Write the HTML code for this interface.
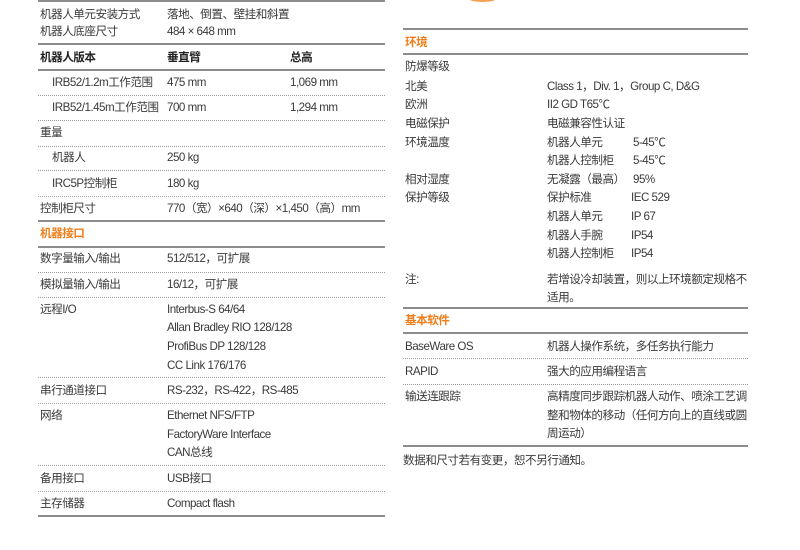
<!DOCTYPE html>
<html><head><meta charset="utf-8"><style>
body{margin:0;width:800px;height:550px;background:#fff;position:relative;overflow:hidden;font-family:"Liberation Sans","Noto Sans CJK SC",sans-serif;font-size:11.6px;color:#3a3a3a}
.t{position:absolute;white-space:nowrap;line-height:14px;letter-spacing:-0.5px}
.b{font-weight:bold;color:#222}
.o{font-weight:bold;color:#f07d1a}
.s{position:absolute;height:0;border-top:2px solid #8c8c8c}
.d{position:absolute;height:0;border-top:1px dotted #9a9a9a}
</style></head><body>
<div style="position:absolute;left:470px;top:-3px;width:25px;height:5px;border-radius:50%;background:#f5a050"></div>
<!-- LEFT -->
<div class="s" style="left:38px;width:347px;top:0"></div>
<div class="t" style="left:40px;top:8px">机器人单元安装方式</div><div class="t" style="left:167px;top:8px">落地、倒置、壁挂和斜置</div>
<div class="t" style="left:40px;top:25px">机器人底座尺寸</div><div class="t" style="left:167px;top:25px">484 × 648 mm</div>
<div class="s" style="left:38px;width:347px;top:43px"></div>
<div class="t b" style="left:40px;top:51px">机器人版本</div><div class="t b" style="left:167px;top:51px">垂直臂</div><div class="t b" style="left:290px;top:51px">总高</div>
<div class="s" style="left:38px;width:347px;top:69px"></div>
<div class="t" style="left:52px;top:76px">IRB52/1.2m工作范围</div><div class="t" style="left:167px;top:76px">475 mm</div><div class="t" style="left:290px;top:76px">1,069 mm</div>
<div class="d" style="left:38px;width:347px;top:95px"></div>
<div class="t" style="left:52px;top:101px">IRB52/1.45m工作范围</div><div class="t" style="left:167px;top:101px">700 mm</div><div class="t" style="left:290px;top:101px">1,294 mm</div>
<div class="d" style="left:38px;width:347px;top:120px"></div>
<div class="t" style="left:40px;top:126px">重量</div>
<div class="d" style="left:38px;width:347px;top:146px"></div>
<div class="t" style="left:52px;top:151px">机器人</div><div class="t" style="left:167px;top:151px">250 kg</div>
<div class="d" style="left:38px;width:347px;top:170px"></div>
<div class="t" style="left:52px;top:177px">IRC5P控制柜</div><div class="t" style="left:167px;top:177px">180 kg</div>
<div class="d" style="left:38px;width:347px;top:196px"></div>
<div class="t" style="left:40px;top:202px">控制柜尺寸</div><div class="t" style="left:167px;top:202px">770（宽）×640（深）×1,450（高）mm</div>
<div class="s" style="left:38px;width:347px;top:220px"></div>
<div class="t o" style="left:40px;top:227px">机器接口</div>
<div class="s" style="left:38px;width:347px;top:246px"></div>
<div class="t" style="left:40px;top:252px">数字量输入/输出</div><div class="t" style="left:167px;top:252px">512/512，可扩展</div>
<div class="d" style="left:38px;width:347px;top:272px"></div>
<div class="t" style="left:40px;top:278px">模拟量输入/输出</div><div class="t" style="left:167px;top:278px">16/12，可扩展</div>
<div class="d" style="left:38px;width:347px;top:297px"></div>
<div class="t" style="left:40px;top:303px">远程I/O</div>
<div class="t" style="left:167px;top:303px">Interbus-S 64/64</div>
<div class="t" style="left:167px;top:321px">Allan Bradley RIO 128/128</div>
<div class="t" style="left:167px;top:340px">ProfiBus DP 128/128</div>
<div class="t" style="left:167px;top:359px">CC Link 176/176</div>
<div class="d" style="left:38px;width:347px;top:377px"></div>
<div class="t" style="left:40px;top:384px">串行通道接口</div><div class="t" style="left:167px;top:384px">RS-232，RS-422，RS-485</div>
<div class="d" style="left:38px;width:347px;top:403px"></div>
<div class="t" style="left:40px;top:409px">网络</div>
<div class="t" style="left:167px;top:409px">Ethernet NFS/FTP</div>
<div class="t" style="left:167px;top:428px">FactoryWare Interface</div>
<div class="t" style="left:167px;top:446px">CAN总线</div>
<div class="d" style="left:38px;width:347px;top:465px"></div>
<div class="t" style="left:40px;top:472px">备用接口</div><div class="t" style="left:167px;top:472px">USB接口</div>
<div class="d" style="left:38px;width:347px;top:491px"></div>
<div class="t" style="left:40px;top:497px">主存储器</div><div class="t" style="left:167px;top:497px">Compact flash</div>
<div class="s" style="left:38px;width:347px;top:515px"></div>
<!-- RIGHT -->
<div class="s" style="left:403px;width:345px;top:28px"></div>
<div class="t o" style="left:405px;top:36px">环境</div>
<div class="s" style="left:403px;width:345px;top:53px"></div>
<div class="t" style="left:405px;top:60px">防爆等级</div>
<div class="t" style="left:405px;top:80px">北美</div><div class="t" style="left:547px;top:80px">Class 1，Div. 1，Group C, D&amp;G</div>
<div class="t" style="left:405px;top:98px">欧洲</div><div class="t" style="left:547px;top:98px">II2 GD T65℃</div>
<div class="t" style="left:405px;top:117px">电磁保护</div><div class="t" style="left:547px;top:117px">电磁兼容性认证</div>
<div class="t" style="left:405px;top:136px">环境温度</div><div class="t" style="left:547px;top:136px">机器人单元</div><div class="t" style="left:633px;top:136px">5-45℃</div>
<div class="t" style="left:547px;top:154px">机器人控制柜</div><div class="t" style="left:633px;top:154px">5-45℃</div>
<div class="t" style="left:405px;top:173px">相对湿度</div><div class="t" style="left:547px;top:173px">无凝露（最高）</div><div class="t" style="left:633px;top:173px">95%</div>
<div class="t" style="left:405px;top:191px">保护等级</div><div class="t" style="left:547px;top:191px">保护标准</div><div class="t" style="left:631px;top:191px">IEC 529</div>
<div class="t" style="left:547px;top:210px">机器人单元</div><div class="t" style="left:631px;top:210px">IP 67</div>
<div class="t" style="left:547px;top:229px">机器人手腕</div><div class="t" style="left:631px;top:229px">IP54</div>
<div class="t" style="left:547px;top:247px">机器人控制柜</div><div class="t" style="left:631px;top:247px">IP54</div>
<div class="t" style="left:405px;top:273px">注:</div><div class="t" style="left:547px;top:273px">若增设冷却装置，则以上环境额定规格不</div>
<div class="t" style="left:547px;top:291px">适用。</div>
<div class="s" style="left:403px;width:345px;top:307px"></div>
<div class="t o" style="left:405px;top:314px">基本软件</div>
<div class="s" style="left:403px;width:345px;top:332px"></div>
<div class="t" style="left:405px;top:340px">BaseWare OS</div><div class="t" style="left:547px;top:340px">机器人操作系统，多任务执行能力</div>
<div class="d" style="left:403px;width:345px;top:358px"></div>
<div class="t" style="left:405px;top:365px">RAPID</div><div class="t" style="left:547px;top:365px">强大的应用编程语言</div>
<div class="d" style="left:403px;width:345px;top:384px"></div>
<div class="t" style="left:405px;top:390px">输送连跟踪</div><div class="t" style="left:547px;top:390px">高精度同步跟踪机器人动作、喷涂工艺调</div>
<div class="t" style="left:547px;top:409px">整和物体的移动（任何方向上的直线或圆</div>
<div class="t" style="left:547px;top:427px">周运动）</div>
<div class="s" style="left:403px;width:345px;top:445px"></div>
<div class="t" style="left:403px;top:454px">数据和尺寸若有变更，恕不另行通知。</div>
</body></html>
